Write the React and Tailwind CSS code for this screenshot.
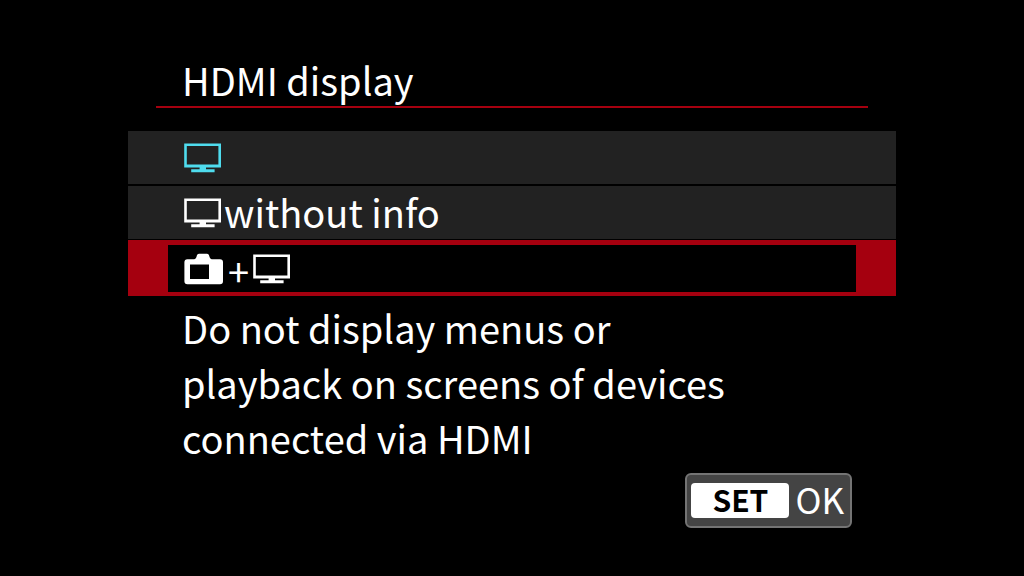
import React from "react";

function Monitor({ className }) {
  return (
    <svg viewBox="0 0 38 30" className={`h-[30px] w-[38px] shrink-0 ${className}`} fill="currentColor" aria-hidden="true">
      <path fillRule="evenodd" d="M0.2 0.4h36.8v24H0.2zM2.8 3v18.6h31.6V3z" />
      <path d="M15.6 24h6.4v2.2h8.6v3H7.2v-3h8.4z" />
    </svg>
  );
}

function Camera() {
  return (
    <svg viewBox="0 0 40 32" className="h-8 w-10 shrink-0" fill="currentColor" aria-hidden="true">
      <path
        fillRule="evenodd"
        d="M3.4 6.2h6.6c1.6-.2 2.2-1.400 2.600-2.800.5-1.800 1.200-2.600 2.400-2.600h8c1.200 0 1.900.8 2.400 2.600.4 1.400 1 2.600 2.600 2.800h8q3 0 3 3v19q0 3-3 3H3.400q-3 0-3-3v-19q0-3 3-3zM6 11.600v14.400h19V11.600z"
      />
    </svg>
  );
}

export default function App() {
  return (
    <main className="min-h-screen bg-black pt-14 pb-6 font-['Noto_Sans_CJK_SC','Noto_Sans',sans-serif] text-[38px] leading-[55px] text-white">
      <div className="mx-auto w-3/4">
        <header className="mx-7 border-b-2 border-[#a5000f] pl-[26px]">
          <h1 className="h-[50px] leading-[47px]">HDMI display</h1>
        </header>

        <div className="mt-[23px] flex flex-col" role="group" aria-label="HDMI display">
          <button type="button" aria-label="Monitor" className="mb-0.5 flex h-[53px] items-center bg-[#222222] pl-14">
            <Monitor className="text-[#4fdcee]" />
          </button>
          <button type="button" className="mb-px flex h-[53px] items-center gap-0.5 bg-[#222222] pl-14">
            <Monitor className="text-white" />
            <span className="pb-0.5">without info</span>
          </button>
          <button type="button" aria-pressed="true" aria-label="Camera + monitor" className="bg-[#a5000f] px-10 pt-[5px] pb-1">
            <span className="flex h-[47px] items-center bg-black pl-4">
              <Camera />
              <span className="w-[29px] pt-1 text-center">+</span>
              <Monitor className="text-white" />
            </span>
          </button>
        </div>

        <p className="mt-1 pl-[54px]">
          Do not display menus or
          <br />
          playback on screens of devices
          <br />
          connected via HDMI
        </p>

        <footer className="mt-2 flex justify-end pr-11">
          <button
            type="button"
            className="flex h-[55px] items-center gap-1.5 rounded-md border-2 border-[#747474] bg-[#444444] pr-1.5 pl-1"
          >
            <span className="flex h-[35px] w-[98px] items-center justify-center rounded bg-white pb-0.5 text-[30px] font-bold text-black">
              SET
            </span>
            <span className="pb-1 text-[35px]">OK</span>
          </button>
        </footer>
      </div>
    </main>
  );
}
